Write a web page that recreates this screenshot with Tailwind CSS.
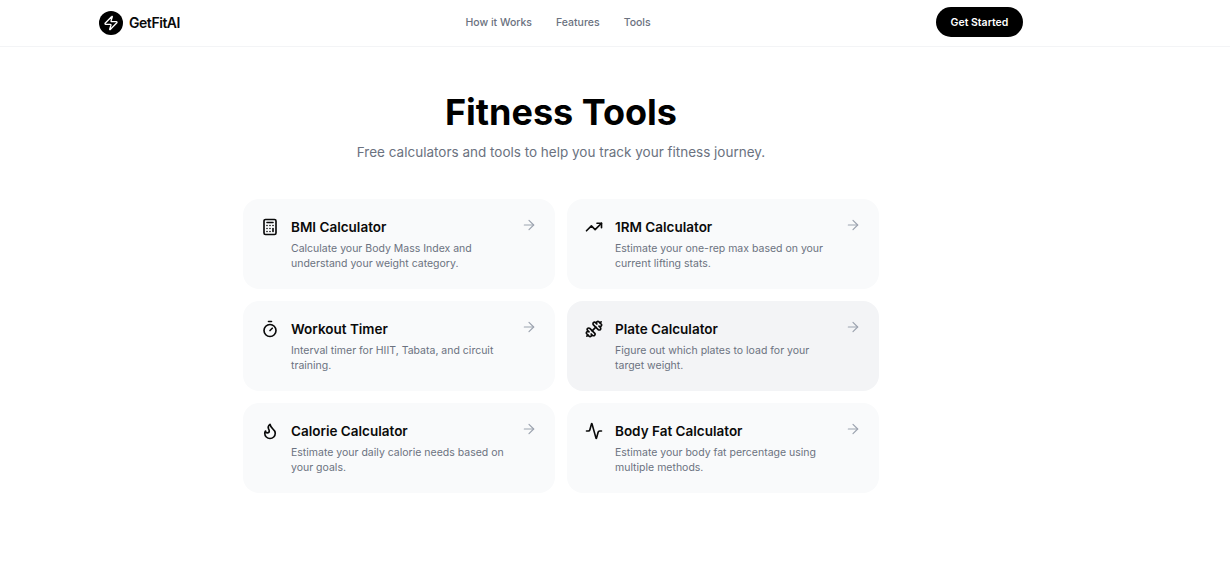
<!DOCTYPE html>
<html lang="en">
<head>
    <meta charset="UTF-8">
    <meta name="viewport" content="width=device-width, initial-scale=1.0">
    <title>Fitness Tools - GetFitAI</title>
    <script src="https://cdn.jsdelivr.net/npm/@tailwindcss/browser@4"></script>
</head>
<body class="bg-white font-['Inter',sans-serif] text-[#0a0a0a]">
    <!-- Nav -->
    <header class="h-[47px] border-b border-[#f3f4f6]">
        <div class="w-[1122px] px-[99px] h-[45px] flex items-center justify-between">
            <a href="#" class="flex items-center gap-[6px]">
                <span class="w-6 h-6 rounded-full bg-black flex items-center justify-center">
                    <svg class="w-4 h-4" viewBox="0 0 24 24" fill="none" stroke="white" stroke-width="2" stroke-linecap="round" stroke-linejoin="round"><path d="M4 14a1 1 0 0 1-.78-1.63l9.9-10.2a.5.5 0 0 1 .86.46l-1.92 6.02A1 1 0 0 0 13 10h7a1 1 0 0 1 .78 1.63l-9.9 10.2a.5.5 0 0 1-.86-.46l1.92-6.02A1 1 0 0 0 11 14z"/></svg>
                </span>
                <span class="text-[14px] font-semibold tracking-[-0.45px]">GetFitAI</span>
            </a>
            <nav class="flex items-center gap-6 text-[10.5px] font-medium text-[#6b7280]">
                <a href="#">How it Works</a>
                <a href="#">Features</a>
                <a href="#">Tools</a>
            </nav>
            <a href="#" class="h-[30px] w-[87px] mb-[1px] pt-[1px] justify-center rounded-full bg-black text-white text-[10.5px] font-semibold flex items-center">Get Started</a>
        </div>
    </header>

    <main class="w-[1122px] pt-[43px]">
        <div class="text-center">
            <h1 class="text-[36px] leading-[44px] font-bold text-black">Fitness Tools</h1>
            <p class="mt-[8px] text-[13.5px] leading-[20px] text-[#6b7280]">Free calculators and tools to help you track your fitness journey.</p>
        </div>

        <div class="mt-[37px] mx-auto w-[636px] grid grid-cols-2 gap-3">
            <div class="h-[90px] rounded-2xl bg-[#f9fafb] pl-[18px] pr-[18px] pt-[17px] flex gap-[12px]">
                <svg class="w-[18px] h-[18px] shrink-0 mt-[1.5px]" viewBox="0 0 24 24" fill="none" stroke="#0a0a0a" stroke-width="2.2" stroke-linecap="round" stroke-linejoin="round"><rect width="16" height="20" x="4" y="2" rx="2"/><line x1="8" x2="16" y1="6" y2="6"/><line x1="16" x2="16" y1="14" y2="18"/><path d="M16 10h.01"/><path d="M12 10h.01"/><path d="M8 10h.01"/><path d="M12 14h.01"/><path d="M8 14h.01"/><path d="M12 18h.01"/><path d="M8 18h.01"/></svg>
                <div class="flex-1">
                    <h3 class="text-[13.5px] leading-[20px] mt-[1px] font-semibold">BMI Calculator</h3>
                    <p class="mt-[4px] text-[10.5px] leading-[15px] text-[#6b7280] w-[215px]">Calculate your Body Mass Index and understand your weight category.</p>
                </div>
                <svg class="w-4 h-4 shrink-0 mt-[0.5px] text-[#9ca3af]" viewBox="0 0 24 24" fill="none" stroke="currentColor" stroke-width="1.75" stroke-linecap="round" stroke-linejoin="round"><path d="M5 12h14"/><path d="m12 5 7 7-7 7"/></svg>
            </div>

            <div class="h-[90px] rounded-2xl bg-[#f9fafb] pl-[18px] pr-[18px] pt-[17px] flex gap-[12px]">
                <svg class="w-[18px] h-[18px] shrink-0 mt-[1.5px]" viewBox="0 0 24 24" fill="none" stroke="#0a0a0a" stroke-width="2.2" stroke-linecap="round" stroke-linejoin="round"><polyline points="22 7 13.5 15.5 8.5 10.5 2 17"/><polyline points="16 7 22 7 22 13"/></svg>
                <div class="flex-1">
                    <h3 class="text-[13.5px] leading-[20px] mt-[1px] font-semibold">1RM Calculator</h3>
                    <p class="mt-[4px] text-[10.5px] leading-[15px] text-[#6b7280] w-[215px]">Estimate your one-rep max based on your current lifting stats.</p>
                </div>
                <svg class="w-4 h-4 shrink-0 mt-[0.5px] text-[#9ca3af]" viewBox="0 0 24 24" fill="none" stroke="currentColor" stroke-width="1.75" stroke-linecap="round" stroke-linejoin="round"><path d="M5 12h14"/><path d="m12 5 7 7-7 7"/></svg>
            </div>

            <div class="h-[90px] rounded-2xl bg-[#f9fafb] pl-[18px] pr-[18px] pt-[17px] flex gap-[12px]">
                <svg class="w-[18px] h-[18px] shrink-0 mt-[1.5px]" viewBox="0 0 24 24" fill="none" stroke="#0a0a0a" stroke-width="2.2" stroke-linecap="round" stroke-linejoin="round"><line x1="10" x2="14" y1="2" y2="2"/><line x1="12" x2="15" y1="14" y2="11"/><circle cx="12" cy="14" r="8"/></svg>
                <div class="flex-1">
                    <h3 class="text-[13.5px] leading-[20px] mt-[1px] font-semibold">Workout Timer</h3>
                    <p class="mt-[4px] text-[10.5px] leading-[15px] text-[#6b7280] w-[215px]">Interval timer for HIIT, Tabata, and circuit training.</p>
                </div>
                <svg class="w-4 h-4 shrink-0 mt-[0.5px] text-[#9ca3af]" viewBox="0 0 24 24" fill="none" stroke="currentColor" stroke-width="1.75" stroke-linecap="round" stroke-linejoin="round"><path d="M5 12h14"/><path d="m12 5 7 7-7 7"/></svg>
            </div>

            <!-- hovered card -->
            <div class="h-[90px] rounded-2xl bg-[#f3f4f6] pl-[18px] pr-[18px] pt-[17px] flex gap-[12px]">
                <svg class="w-[18px] h-[18px] shrink-0 mt-[1.5px]" viewBox="0 0 24 24" fill="none" stroke="#0a0a0a" stroke-width="2.2" stroke-linecap="round" stroke-linejoin="round"><path d="M17.596 12.768a2 2 0 1 0 2.829-2.829l-1.768-1.767a2 2 0 0 0 2.828-2.829l-2.828-2.828a2 2 0 0 0-2.829 2.828l-1.767-1.768a2 2 0 1 0-2.829 2.829z"/><path d="m2.5 21.5 1.4-1.4"/><path d="m20.1 3.9 1.4-1.4"/><path d="M5.343 21.485a2 2 0 1 0 2.829-2.828l1.767 1.768a2 2 0 1 0 2.829-2.829l-6.364-6.364a2 2 0 1 0-2.829 2.829l1.768 1.767a2 2 0 0 0-2.828 2.829z"/><path d="m9.6 14.4 4.8-4.8"/></svg>
                <div class="flex-1">
                    <h3 class="text-[13.5px] leading-[20px] mt-[1px] font-semibold">Plate Calculator</h3>
                    <p class="mt-[4px] text-[10.5px] leading-[15px] text-[#6b7280] w-[215px]">Figure out which plates to load for your target weight.</p>
                </div>
                <svg class="w-4 h-4 shrink-0 mt-[0.5px] text-[#9ca3af]" viewBox="0 0 24 24" fill="none" stroke="currentColor" stroke-width="1.75" stroke-linecap="round" stroke-linejoin="round"><path d="M5 12h14"/><path d="m12 5 7 7-7 7"/></svg>
            </div>

            <div class="h-[90px] rounded-2xl bg-[#f9fafb] pl-[18px] pr-[18px] pt-[17px] flex gap-[12px]">
                <svg class="w-[18px] h-[18px] shrink-0 mt-[1.5px]" viewBox="0 0 24 24" fill="none" stroke="#0a0a0a" stroke-width="2.2" stroke-linecap="round" stroke-linejoin="round"><path d="M8.5 14.5A2.5 2.5 0 0 0 11 12c0-1.38-.5-2-1-3-1.072-2.143-.224-4.054 2-6 .5 2.5 2 4.9 4 6.5 2 1.6 3 3.5 3 5.5a7 7 0 1 1-14 0c0-1.153.433-2.294 1-3a2.5 2.5 0 0 0 2.5 2.5z"/></svg>
                <div class="flex-1">
                    <h3 class="text-[13.5px] leading-[20px] mt-[1px] font-semibold">Calorie Calculator</h3>
                    <p class="mt-[4px] text-[10.5px] leading-[15px] text-[#6b7280] w-[215px]">Estimate your daily calorie needs based on your goals.</p>
                </div>
                <svg class="w-4 h-4 shrink-0 mt-[0.5px] text-[#9ca3af]" viewBox="0 0 24 24" fill="none" stroke="currentColor" stroke-width="1.75" stroke-linecap="round" stroke-linejoin="round"><path d="M5 12h14"/><path d="m12 5 7 7-7 7"/></svg>
            </div>

            <div class="h-[90px] rounded-2xl bg-[#f9fafb] pl-[18px] pr-[18px] pt-[17px] flex gap-[12px]">
                <svg class="w-[18px] h-[18px] shrink-0 mt-[1.5px]" viewBox="0 0 24 24" fill="none" stroke="#0a0a0a" stroke-width="2.2" stroke-linecap="round" stroke-linejoin="round"><path d="M22 12h-2.48a2 2 0 0 0-1.93 1.46l-2.35 8.36a.25.25 0 0 1-.48 0L9.24 2.18a.25.25 0 0 0-.48 0l-2.35 8.36A2 2 0 0 1 4.49 12H2"/></svg>
                <div class="flex-1">
                    <h3 class="text-[13.5px] leading-[20px] mt-[1px] font-semibold">Body Fat Calculator</h3>
                    <p class="mt-[4px] text-[10.5px] leading-[15px] text-[#6b7280] w-[215px]">Estimate your body fat percentage using multiple methods.</p>
                </div>
                <svg class="w-4 h-4 shrink-0 mt-[0.5px] text-[#9ca3af]" viewBox="0 0 24 24" fill="none" stroke="currentColor" stroke-width="1.75" stroke-linecap="round" stroke-linejoin="round"><path d="M5 12h14"/><path d="m12 5 7 7-7 7"/></svg>
            </div>
        </div>
    </main>
</body>
</html>
